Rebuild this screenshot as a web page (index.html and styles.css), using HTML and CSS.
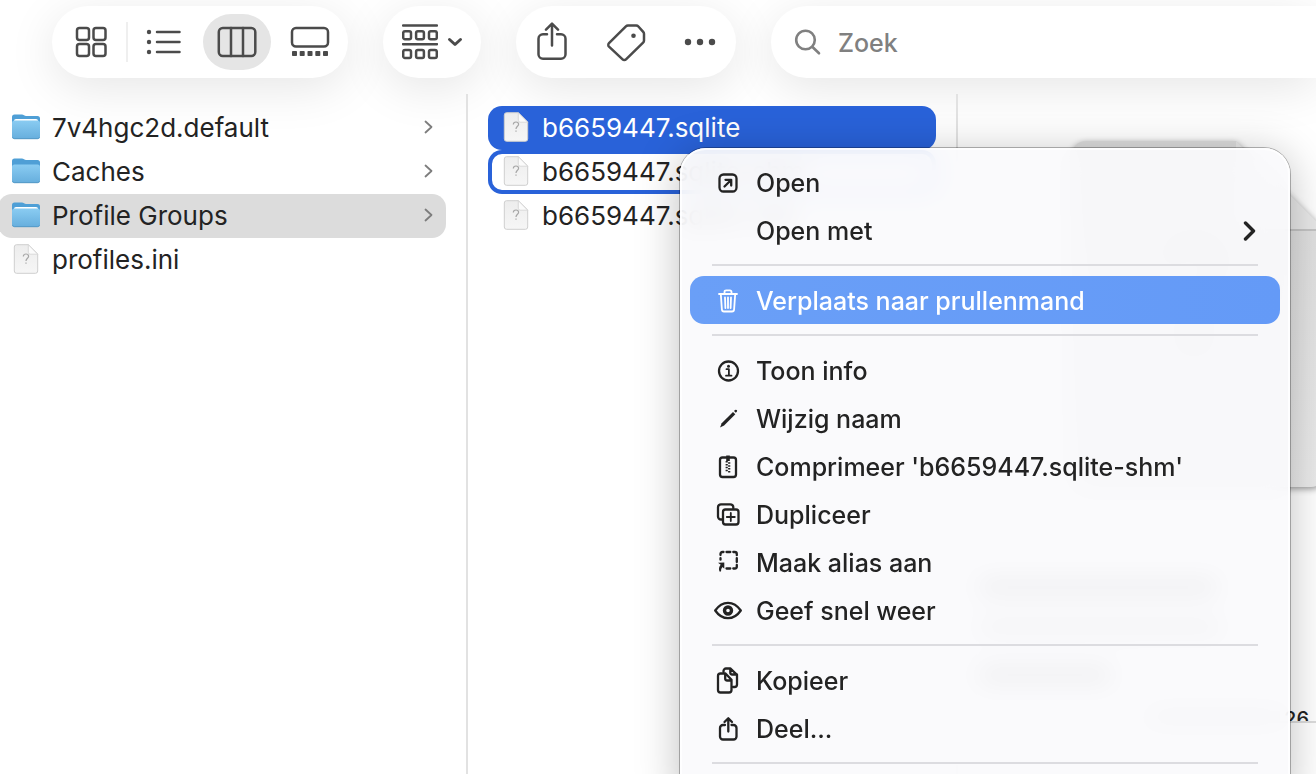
FILE: index.html
```html
<!DOCTYPE html>
<html lang="nl">
<head>
  <meta charset="UTF-8">
  <meta name="viewport" content="width=device-width, initial-scale=1.0">
  <title>Profile Groups</title>
  <link rel="stylesheet" href="styles.css">
</head>
<body>

  <!-- Shared file icons -->
  <svg class="defs" aria-hidden="true">
    <defs>
      <linearGradient id="folderFront" x1="0" y1="0" x2="0" y2="1">
        <stop offset="0" stop-color="#8accf2"/>
        <stop offset="1" stop-color="#66aedd"/>
      </linearGradient>
      <linearGradient id="paper" x1="0" y1="0" x2="0" y2="1">
        <stop offset="0" stop-color="#ededed"/>
        <stop offset="1" stop-color="#f6f6f6"/>
      </linearGradient>
      <linearGradient id="bigPaper" x1="0" y1="0" x2="0" y2="1">
        <stop offset="0" stop-color="#dcdcdc"/>
        <stop offset="1" stop-color="#ebebeb"/>
      </linearGradient>
      <symbol id="folder" viewBox="0 0 28 30">
        <path d="M0 5a2.500 2.500 0 0 1 2.500-2.500h7.500q1 0 2 .8t2 .8h11.500a2.500 2.500 0 0 1 2.500 2.500V14H0z" fill="#4f9fd6"/>
        <path class="folder-sheet" d="M2 9a2 2 0 0 1 2-2h20a2 2 0 0 1 2 2v4H2z"/>
        <path d="M0 11a2.500 2.500 0 0 1 2.500-2.500h23a2.500 2.500 0 0 1 2.500 2.500v13.500a2.500 2.500 0 0 1-2.500 2.500h-23a2.500 2.500 0 0 1-2.500-2.500z" fill="url(#folderFront)"/>
        <path d="M.5 25.200q.7 1.500 2 1.500h23q1.300 0 2-1.500" fill="none" stroke="#5599c6"/>
      </symbol>
      <symbol id="file" viewBox="0 0 28 30">
        <path d="M4.500.7h11.800L25.700 10v17a2.300 2.300 0 0 1-2.300 2.300H4.600A2.300 2.300 0 0 1 2.300 27V3A2.300 2.300 0 0 1 4.500.7z" fill="url(#paper)" stroke="#cfcfcf"/>
        <path d="M16.300.7v7.500a2 2 0 0 0 2 2h7.400z" fill="#fbfbfb" stroke="#d2d2d2" stroke-width=".8"/>
        <path d="M11.300 12.600q.1-2.600 2.700-2.600t2.600 2.300c0 2-2.600 2-2.600 4.700M14 18.400v1.300" fill="none" stroke="#a6a6a6" stroke-width="1.200"/>
      </symbol>
    </defs>
  </svg>

  <div class="window">
    <header class="toolbar">
      <div class="group views">
        <button class="tool" aria-label="Symbolen">
          <svg width="32" height="32" viewBox="0 0 32 32"><g class="line"><rect x="2" y="2" width="12" height="12" rx="2.500"/><rect x="18.500" y="2" width="12" height="12" rx="2.500"/><rect x="2" y="18" width="12" height="12" rx="2.500"/><rect x="18.500" y="18" width="12" height="12" rx="2.500"/></g></svg>
        </button>
        <button class="tool" aria-label="Lijst">
          <svg width="36" height="36" viewBox="0 0 36 36"><path class="line" d="M11 8h22.500M11 18h22.500M11 28h22.500"/><g class="solid"><circle cx="3" cy="8" r="2.200"/><circle cx="3" cy="18" r="2.200"/><circle cx="3" cy="28" r="2.200"/></g></svg>
        </button>
        <button class="tool active" aria-label="Kolommen">
          <svg width="40" height="32" viewBox="0 0 40 32"><g class="line"><rect x="1.800" y="2" width="36.500" height="28" rx="4"/><path d="M14 2v28M26 2v28"/></g></svg>
        </button>
        <button class="tool" aria-label="Galerij">
          <svg width="40" height="32" viewBox="0 0 40 32"><rect class="line" x="2" y="2" width="36" height="18.500" rx="4"/><g class="solid"><rect x="2" y="25" width="5" height="5" rx=".8"/><rect x="9.700" y="25" width="5" height="5" rx=".8"/><rect x="17.500" y="25" width="5" height="5" rx=".8"/><rect x="25.300" y="25" width="5" height="5" rx=".8"/><rect x="33" y="25" width="5" height="5" rx=".8"/></g></svg>
        </button>
      </div>

      <button class="group sort" aria-label="Groepeer">
        <svg width="36" height="36" viewBox="0 0 36 36"><g class="line"><path d="M1 1.500h34M1 20.200h34"/><rect x="1.200" y="7.200" width="7.800" height="8" rx="1.800"/><rect x="14.100" y="7.200" width="7.800" height="8" rx="1.800"/><rect x="27" y="7.200" width="7.800" height="8" rx="1.800"/><rect x="1.200" y="26" width="7.800" height="8" rx="1.800"/><rect x="14.100" y="26" width="7.800" height="8" rx="1.800"/><rect x="27" y="26" width="7.800" height="8" rx="1.800"/></g></svg>
        <svg width="16" height="16" viewBox="0 0 16 16"><path class="line bold" d="M2.500 5.500 8 10.500l5.500-5"/></svg>
      </button>

      <div class="group actions">
        <button class="tool" aria-label="Deel">
          <svg width="36" height="40" viewBox="0 0 36 40"><path class="line" d="M13 12.200H9a4.500 4.500 0 0 0-4.500 4.500v15.500a4.500 4.500 0 0 0 4.500 4.500h18a4.500 4.500 0 0 0 4.500-4.500V16.700a4.500 4.500 0 0 0-4.500-4.500h-4M18 23.500V2M12 7.700l6-6 6 6"/></svg>
        </button>
        <button class="tool" aria-label="Tags">
          <svg width="40" height="40" viewBox="0 0 40 40"><path class="line" d="M22 3.500h8.200a3 3 0 0 1 2.200 1l4.800 5.300a3 3 0 0 1 .8 2v6.700a3 3 0 0 1-.9 2.100L20 37.400a2.400 2.400 0 0 1-3.400 0L3 24.600a2.400 2.400 0 0 1 0-3.400L19.900 4.400a3 3 0 0 1 2.100-.9z"/><circle class="solid" cx="27.500" cy="13.800" r="2.300"/></svg>
        </button>
        <button class="tool" aria-label="Meer">
          <svg width="36" height="36" viewBox="0 0 36 36"><g class="solid"><circle cx="6" cy="18" r="3.200"/><circle cx="18" cy="18" r="3.200"/><circle cx="30" cy="18" r="3.200"/></g></svg>
        </button>
      </div>

      <label class="group search">
        <svg width="28" height="28" viewBox="0 0 28 28"><circle cx="11.500" cy="12" r="9.300"/><path d="m18.500 19 6.500 6.300"/></svg>
        <input type="search" placeholder="Zoek" aria-label="Zoek">
      </label>
    </header>

    <main class="columns">
      <nav class="column first">
        <a class="row" href="#"><svg class="icon with-sheet"><use href="#folder"/></svg><span>7v4hgc2d.default</span><svg class="arrow" viewBox="0 0 10 14"><path d="m1.500 1.500 6 5.500-6 5.500"/></svg></a>
        <a class="row" href="#"><svg class="icon"><use href="#folder"/></svg><span>Caches</span><svg class="arrow" viewBox="0 0 10 14"><path d="m1.500 1.500 6 5.500-6 5.500"/></svg></a>
        <a class="row current" href="#"><svg class="icon with-sheet"><use href="#folder"/></svg><span>Profile Groups</span><svg class="arrow" viewBox="0 0 10 14"><path d="m1.500 1.500 6 5.500-6 5.500"/></svg></a>
        <a class="row" href="#"><svg class="icon"><use href="#file"/></svg><span>profiles.ini</span></a>
      </nav>

      <nav class="column">
        <a class="row selected" href="#"><svg class="icon"><use href="#file"/></svg><span>b6659447.sqlite</span></a>
        <a class="row target" href="#"><svg class="icon"><use href="#file"/></svg><span>b6659447.sqlite-shm</span></a>
        <a class="row" href="#"><svg class="icon"><use href="#file"/></svg><span>b6659447.sqlite-wal</span></a>
      </nav>

      <section class="preview">
        <div class="preview-body">
          <svg class="document" width="270" height="360" viewBox="0 0 270 360" aria-hidden="true">
            <path d="M18 6h150l89 89v243a14 14 0 0 1-14 14H18a14 14 0 0 1-14-14V20A14 14 0 0 1 18 6z" fill="url(#bigPaper)"/>
            <path d="M168 6v77a12 12 0 0 0 12 12h77z" fill="#e8e8e8"/>
            <path d="M180 95h77" stroke="#c4c4c4" stroke-width="2"/>
            <path d="M102 130q0-22 24-22t24 20c0 20-24 20-24 45" fill="none" stroke="#aaa" stroke-width="8"/>
            <circle cx="126" cy="204" r="6" fill="#aaa"/>
          </svg>
          <div class="bar name"></div>
          <div class="bar kind"></div>
          <div class="bar info"></div>
          <div class="date"><div class="bar"></div><span>26</span></div>
        </div>
        <div class="preview-footer"></div>
      </section>
    </main>
  </div>

  <div class="menu" role="menu">
    <button class="item" role="menuitem">
      <svg viewBox="0 0 28 28"><rect x="5.500" y="5.500" width="17" height="17" rx="4"/><path d="m10.500 17.500 6.300-6.300M11.500 10.800h5.700v5.700"/></svg>
      <span>Open</span>
    </button>
    <button class="item" role="menuitem">
      <svg viewBox="0 0 28 28"></svg>
      <span>Open met</span>
      <svg class="more" viewBox="0 0 14 20"><path d="m3.500 2 8 8-8 8"/></svg>
    </button>
    <hr>
    <button class="item highlighted" role="menuitem">
      <svg viewBox="0 0 28 28"><g class="thin"><path d="M5 7h18M10.500 7V5q0-1.700 1.700-1.700h3.600q1.700 0 1.700 1.700v2M6.800 7l1.100 15.500q.1 2 2.100 2h8q2 0 2.100-2L21.200 7M11 10.500l.4 10.500M14 10.500V21M17 10.500 16.600 21"/></g></svg>
      <span>Verplaats naar prullenmand</span>
    </button>
    <hr>
    <button class="item" role="menuitem">
      <svg viewBox="0 0 28 28"><circle cx="14.500" cy="14" r="9.500"/><path class="thin" d="M12.500 12.200h2.400v6.300M12 18.700h5.500"/><circle class="fill" cx="14.500" cy="9.300" r="1.500"/></svg>
      <span>Toon info</span>
    </button>
    <button class="item" role="menuitem">
      <svg viewBox="0 0 28 28"><path class="fill" d="m6 22.500 1.700-4.200L19 7l2.300 2.300L10.100 20.500z"/><path class="fill" d="m20 6 1-1q.8-.7 1.700.1t.1 1.700l-1 1z"/></svg>
      <span>Wijzig naam</span>
    </button>
    <button class="item" role="menuitem">
      <svg viewBox="0 0 28 28"><rect x="6" y="4.500" width="16" height="19.500" rx="2.500"/><path class="fill" d="M12.200 2.500h3.600V8h-3.600z"/><path class="zip" d="M12.700 8v11M15.200 9.300v11"/></svg>
      <span>Comprimeer 'b6659447.sqlite-shm'</span>
    </button>
    <button class="item" role="menuitem">
      <svg viewBox="0 0 28 28"><path d="M8.500 18.500H7A3 3 0 0 1 4 15.500V6.300a3 3 0 0 1 3-3h9.300a3 3 0 0 1 3 3v1"/><rect x="9" y="8.500" width="15.500" height="15" rx="2.500"/><path class="thin" d="M16.800 12v8M12.800 16h8"/></svg>
      <span>Dupliceer</span>
    </button>
    <button class="item" role="menuitem">
      <svg viewBox="0 0 28 28"><path d="M6.500 6V5q0-2 2-2h1M12.500 3h3.800M19.300 3h1.500q2 0 2 2v1.200M22.800 9.200v3.800M22.800 16v1.500q0 2-2 2h-1.500M16.300 19.500h-3.800M6.500 9.200v1.500"/><path class="fill" d="M4 13.800 10.300 13.500v6.200L8.500 18q-1.700 1.700-1.500 4.500H5.500q-1.500-3.500 1.200-6.700z"/></svg>
      <span>Maak alias aan</span>
    </button>
    <button class="item" role="menuitem">
      <svg viewBox="0 0 28 28"><path d="M1.200 13.500Q6.500 5.800 14 5.800t12.800 7.700q-5.300 7.700-12.800 7.700T1.200 13.500z"/><circle cx="14" cy="13.500" r="3.500" class="pupil"/></svg>
      <span>Geef snel weer</span>
    </button>
    <hr>
    <button class="item" role="menuitem">
      <svg viewBox="0 0 28 28"><path d="M9.500 5V4a2.500 2.500 0 0 1 2.500-2.500h4.500l6.500 6.300v9.700a2.500 2.500 0 0 1-2.500 2.500H19M16.300 1.500v4q0 2 2 2H23"/><path d="M7 6.500h4.500l6 6.200v10.300a2.500 2.500 0 0 1-2.500 2.500H6.500A2.500 2.500 0 0 1 4 23V9A2.500 2.500 0 0 1 6.500 6.500zM11.200 6.500v5q0 2 2 2h4.300"/></svg>
      <span>Kopieer</span>
    </button>
    <button class="item" role="menuitem">
      <svg viewBox="0 0 28 28"><path d="M11 10H9a3 3 0 0 0-3 3v8.500a3 3 0 0 0 3 3h10.500a3 3 0 0 0 3-3V13a3 3 0 0 0-3-3h-2M14.300 16.500V3.500M10.500 7l3.800-3.800L18 7"/></svg>
      <span>Deel...</span>
    </button>
    <hr>
  </div>

</body>
</html>
```

FILE: styles.css
```css
* {
  box-sizing: border-box;
}

body {
  margin: 0;
  overflow: hidden;
  background: #fff;
  color: #232323;
  font-family: Inter, "Liberation Sans", sans-serif;
  font-size: 25px;
}

button,
input {
  border: none;
  background: none;
  color: inherit;
  font: inherit;
}

button {
  padding: 0;
}

svg {
  flex: none;
}

.defs {
  position: absolute;
  width: 0;
  height: 0;
}

.window {
  display: flex;
  flex-direction: column;
  height: 100vh;
  overflow: hidden;
}

/* Toolbar */
.toolbar {
  display: flex;
  gap: 35px;
  height: 94px;
  padding: 6px 0 16px 52px;
}

.group {
  display: flex;
  align-items: center;
  border-radius: 36px;
  background: #fff;
  box-shadow: 0 10px 48px rgba(0, 0, 0, 0.1);
}

.views {
  gap: 5px;
  padding: 0 4px 0 5px;
}

.tool {
  position: relative;
  display: flex;
  align-items: center;
  justify-content: center;
  width: 68px;
  height: 56px;
  border-radius: 28px;
}

.tool.active {
  background: #e5e5e5;
}

.views .tool:first-child::after {
  content: "";
  position: absolute;
  top: 8px;
  right: -3px;
  width: 2px;
  height: 40px;
  background: #efefef;
}

.sort {
  gap: 9px;
  padding: 0 18px 0 19px;
}

.actions {
  gap: 6px;
  padding: 0 2px;
}

.line {
  fill: none;
  stroke: #4b4b4b;
  stroke-width: 2.5;
  stroke-linecap: round;
  stroke-linejoin: round;
}

.line.bold {
  stroke-width: 3;
}

.solid {
  fill: #4b4b4b;
}

.search {
  flex: 1;
  gap: 16px;
  padding-left: 23px;
  border-radius: 36px 0 0 36px;
}

.search svg {
  fill: none;
  stroke: #808080;
  stroke-width: 2.6;
  stroke-linecap: round;
}

.search input {
  flex: 1;
  min-width: 0;
  padding: 2px 0 0;
  outline: none;
  font-weight: 500;
}

.search input::placeholder {
  color: #808080;
  opacity: 1;
}

/* Columns */
.columns {
  display: flex;
  flex: 1;
  min-height: 0;
}

.column {
  flex: none;
  width: 490px;
  padding: 12px 20px 0;
  border-right: 2px solid #e2e2e2;
}

.column.first {
  width: 468px;
  padding-left: 0;
}

.first .row {
  margin-left: -2px;
}

.row {
  display: flex;
  align-items: center;
  gap: 12px;
  height: 44px;
  padding: 0 12px 2px 14px;
  border-radius: 14px;
  color: inherit;
  font-size: 26px;
  text-decoration: none;
  white-space: nowrap;
}

.row span {
  flex: 1;
}

.row.current {
  background: #dcdcdc;
}

.row.selected {
  background: #2962d9;
  color: #fff;
}

.row.target {
  box-shadow: inset 0 0 0 4px #2962d9;
}

.icon {
  width: 28px;
  height: 30px;
}

.with-sheet {
  --sheet: #fff;
}

.folder-sheet {
  fill: var(--sheet, none);
}

.arrow {
  width: 10px;
  height: 14px;
  fill: none;
  stroke: #7d7d7d;
  stroke-width: 1.8;
  stroke-linecap: round;
  stroke-linejoin: round;
}

/* Preview */
.preview {
  display: flex;
  flex: 1;
  flex-direction: column;
  min-width: 0;
}

.preview-body {
  flex: 1;
  min-height: 0;
  padding: 41px 0 0 22px;
  overflow: hidden;
}

.document {
  display: block;
  margin-left: 88px;
  filter: drop-shadow(0 2px 3px rgba(0, 0, 0, 0.4));
}

.bar {
  height: 16px;
  background: #bbb;
}

.bar.name {
  width: 236px;
  margin-top: 84px;
  background: #888;
}

.bar.kind {
  width: 240px;
  margin-top: 24px;
}

.bar.info {
  width: 130px;
  margin-top: 32px;
  background: #888;
}

.date {
  display: flex;
  align-items: center;
  justify-content: flex-end;
  gap: 4px;
  height: 24px;
  margin-top: 24px;
  padding-right: 7px;
  font-size: 20px;
  font-weight: 500;
}

.date .bar {
  width: 130px;
}

.preview-footer {
  height: 53px;
  border-top: 2px solid #dcdcdc;
  background: #fff;
}

/* Context menu */
.menu {
  position: absolute;
  top: 148px;
  left: 680px;
  width: 610px;
  padding: 10px 10px 30px;
  border-radius: 26px;
  background: rgba(250, 250, 252, 0.9);
  box-shadow: inset 0 0 0 2px rgba(255, 255, 255, 0.8), 0 0 0 1px rgba(0, 0, 0, 0.28), 0 6px 44px rgba(0, 0, 0, 0.26);
  backdrop-filter: blur(12px);
  font-weight: 450;
}

.item {
  display: flex;
  align-items: center;
  gap: 14px;
  width: 100%;
  height: 48px;
  padding: 2px 24px 0;
  border-radius: 14px;
  text-align: left;
  white-space: nowrap;
}

.item span {
  flex: 1;
}

.item svg {
  width: 28px;
  height: 28px;
  fill: none;
  stroke: currentColor;
  stroke-width: 2.3;
  stroke-linecap: round;
  stroke-linejoin: round;
}

.item .more {
  width: 14px;
  height: 20px;
  stroke-width: 3.4;
}

.item .thin {
  stroke-width: 1.8;
}

.item .fill {
  fill: currentColor;
  stroke: none;
}

.item .zip {
  stroke-width: 2.2;
  stroke-linecap: butt;
  stroke-dasharray: 1.5 1.4;
}

.item .pupil {
  stroke-width: 3.4;
}

.item.highlighted {
  background: linear-gradient(90deg, #6a9ff7, #649af7);
  color: #fff;
}

.menu hr {
  height: 2px;
  margin: 10px 22px;
  border: none;
  background: #dcdce0;
}
```
